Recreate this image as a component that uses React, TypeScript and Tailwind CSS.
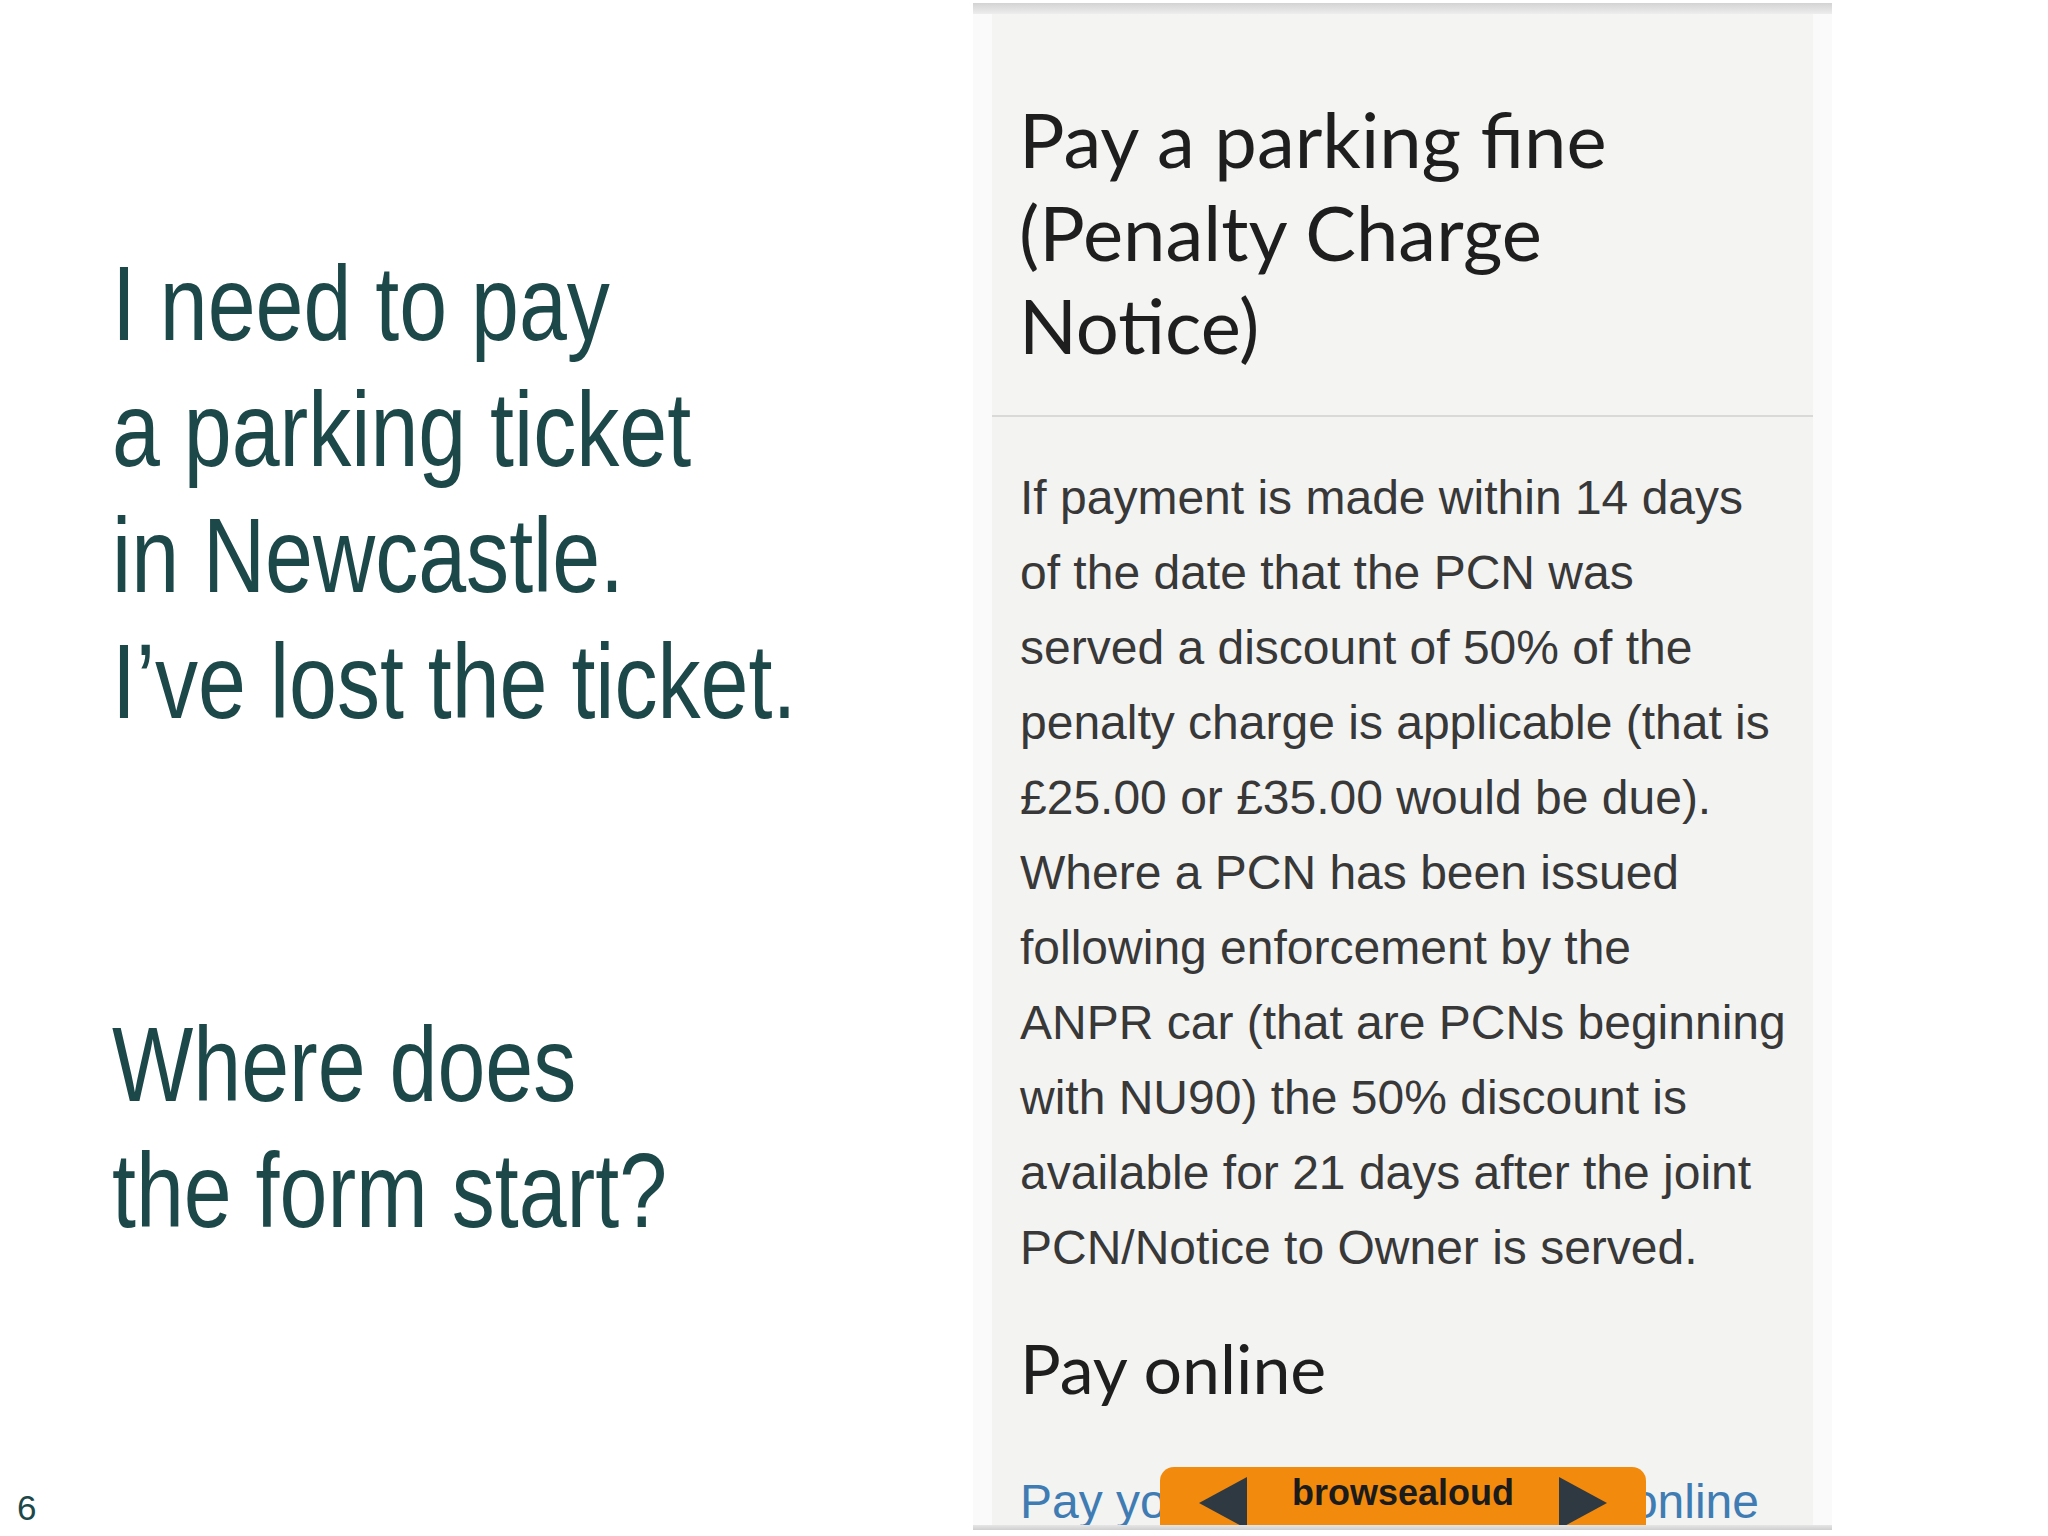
const slideFont = "font-['Liberation_Sans',Arial,sans-serif]";

function Triangle({ dir }: { dir: "left" | "right" }) {
  return (
    <svg width="48" height="52" viewBox="0 0 48 52" className="shrink-0">
      {dir === "left" ? (
        <polygon points="48,0 48,52 0,26" fill="#2f3942" />
      ) : (
        <polygon points="0,0 0,52 48,26" fill="#2f3942" />
      )}
    </svg>
  );
}

function BrowseAloud() {
  return (
    <div className="absolute left-[168px] top-[1453px] w-[486px] h-[80px] bg-[#f28a0d] rounded-t-[14px] flex items-start justify-between px-[39px]">
      <div className="mt-[10px]">
        <Triangle dir="left" />
      </div>
      <span className="mt-[8px] text-[36px] leading-none font-bold text-[#1b1b1b] font-['Liberation_Sans',Arial,sans-serif]">
        browsealoud
      </span>
      <div className="mt-[10px]">
        <Triangle dir="right" />
      </div>
    </div>
  );
}

function PhoneShot() {
  return (
    <div className="w-[859px] h-[1527px] mt-[3px] flex flex-col">
      <div className="h-[11px] bg-gradient-to-b from-[#d3d3d3] to-[#ededed]" />
      <div className="flex-1 flex px-[19px] bg-[#fafafa] min-h-0">
        <div className="relative flex-1 flex flex-col bg-[#f3f3f2] overflow-hidden">
          <div className="pl-[27px] pt-[78px] pb-[44px] border-b-2 border-[#d9d9d8] bg-[#f4f4f3]">
            <h1 className="text-[76px] leading-[93px] text-[#1e1e1e] font-['Lato',sans-serif]">
              Pay a parking fine
              <br />
              (Penalty Charge
              <br />
              Notice)
            </h1>
          </div>
          <div className="h-[12px] bg-[#f9f9f8]" />
          <div className="pl-[28px] font-['Liberation_Sans',Arial,sans-serif]">
            <p className="mt-[43px] text-[48px] leading-[75px] text-[#383838]">
              If payment is made within 14 days
              <br />
              of the date that the PCN was
              <br />
              served a discount of 50% of the
              <br />
              penalty charge is applicable (that is
              <br />
              £25.00 or £35.00 would be due).
              <br />
              Where a PCN has been issued
              <br />
              following enforcement by the
              <br />
              ANPR car (that are PCNs beginning
              <br />
              with NU90) the 50% discount is
              <br />
              available for 21 days after the joint
              <br />
              PCN/Notice to Owner is served.
            </p>
            <h2 className="mt-[36px] text-[68px] leading-[93px] text-[#1e1e1e] font-['Lato',sans-serif]">
              Pay online
            </h2>
            <p className="mt-[50px] text-[48px] leading-[75px] text-[#3f7cb3] whitespace-nowrap">
              Pay your parking fine (PCN) online
            </p>
          </div>
          <BrowseAloud />
        </div>
      </div>
      <div className="h-[5px] bg-gradient-to-b from-[#e6e6e6] to-[#cfcfcf]" />
    </div>
  );
}

export default function App() {
  return (
    <div className="w-[2048px] h-[1536px] bg-white flex overflow-hidden">
      <div className={`w-[973px] flex flex-col text-[#1d4849] ${slideFont}`}>
        <div className="pl-[112px] pt-[241px]">
          <p className="text-[105px] leading-[126px] whitespace-nowrap scale-x-[0.82] origin-left">
            I need to pay
            <br />
            a parking ticket
            <br />
            in Newcastle.
            <br />
            I’ve lost the ticket.
          </p>
          <p className="mt-[257px] text-[105px] leading-[126px] whitespace-nowrap scale-x-[0.82] origin-left">
            Where does
            <br />
            the form start?
          </p>
        </div>
        <div className="mt-auto pl-[17px] pb-[11px] text-[35px] leading-none">
          6
        </div>
      </div>
      <PhoneShot />
    </div>
  );
}
